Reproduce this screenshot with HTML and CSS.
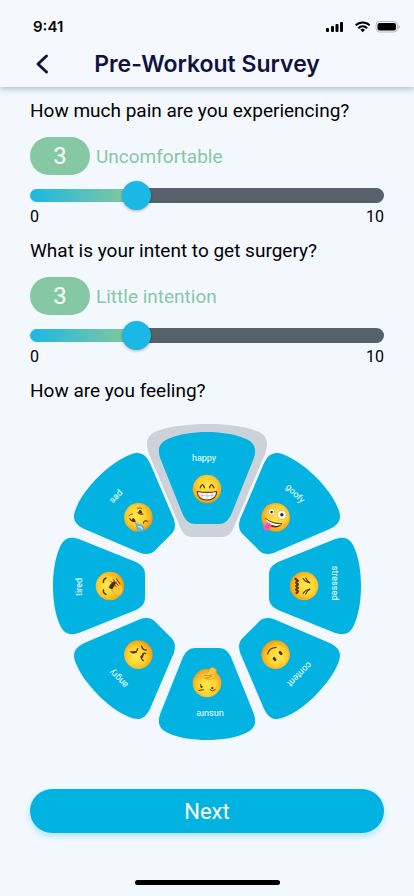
FILE: index.html
```html
<!DOCTYPE html>
<html lang="en">
<head>
<meta charset="utf-8">
<meta name="viewport" content="width=device-width, initial-scale=1">
<title>Pre-Workout Survey</title>
<link rel="stylesheet" href="styles.css">
</head>
<body>
<header class="top">
  <div class="status">
    <span class="time">9:41</span>
    <svg class="status-icons" width="74" height="14" viewBox="0 0 74 14" aria-hidden="true">
      <rect x="0" y="8" width="3" height="4" rx="1"/>
      <rect x="5" y="6" width="3" height="6" rx="1"/>
      <rect x="9.500" y="4" width="3" height="8" rx="1"/>
      <rect x="14" y="2" width="3" height="10" rx="1"/>
      <g fill="none" stroke="#000" stroke-width="2">
        <path d="M29.7 5.4a10 10 0 0 1 14 0"/>
        <path d="M32.3 8.2a6.200 6.200 0 0 1 8.800 0"/>
      </g>
      <path d="M36.700 12.200l-2.300-2.400a3.400 3.400 0 0 1 4.600 0z"/>
      <rect x="50" y="1.500" width="21.500" height="10.500" rx="3.500" fill="none" stroke="#b6babf"/>
      <rect x="51.500" y="3" width="18.500" height="7.500" rx="2"/>
      <path d="M72.500 5v4q1.500-.6 1.500-2t-1.500-2z" fill="#b6babf"/>
    </svg>
  </div>
  <div class="bar">
    <button class="back" type="button" aria-label="Back">
      <svg width="14" height="22" viewBox="0 0 14 22" aria-hidden="true"><path d="M11.500 3L3 11l8.500 8"/></svg>
    </button>
    <h1>Pre-Workout Survey</h1>
  </div>
</header>
<main>
  <form class="survey">
    <section class="question">
      <label class="prompt" for="pain">How much pain are you experiencing?</label>
      <div class="answer"><output class="pill" for="pain">3</output><span>Uncomfortable</span></div>
      <div class="slider">
        <div class="track"><div class="fill" style="width:30%"></div></div>
        <input id="pain" type="range" min="0" max="10" value="3">
      </div>
      <div class="ends"><span>0</span><span>10</span></div>
    </section>
    <section class="question">
      <label class="prompt" for="intent">What is your intent to get surgery?</label>
      <div class="answer"><output class="pill" for="intent">3</output><span>Little intention</span></div>
      <div class="slider">
        <div class="track"><div class="fill" style="width:30%"></div></div>
        <input id="intent" type="range" min="0" max="10" value="3">
      </div>
      <div class="ends"><span>0</span><span>10</span></div>
    </section>
    <fieldset class="feelings">
      <legend class="prompt">How are you feeling?</legend>
      <div class="wheel">
        <label class="slice"><input type="radio" name="feeling" checked>
          <svg viewBox="-162 -162 324 324">
            <defs>
              <radialGradient id="skin" cx=".5" cy=".42" r=".6">
                <stop offset="0" stop-color="#ffe94f"/><stop offset=".55" stop-color="#ffd130"/><stop offset=".85" stop-color="#f7a81b"/><stop offset="1" stop-color="#e08a12"/>
              </radialGradient>
              <path id="halo" d="M-15-49C-20-49-24-52-26-57L-58-132C-62-144-60-151-50-155C-36-160-18-162 0-162S36-160 50-155C60-151 62-144 58-132L26-57C24-52 20-49 15-49Z"/>
              <path id="wedge" d="M-12-62C-17-62-21-65-24-71L-46.500-127C-50-137-48-143-39-147C-28-152-14-154 0-154S28-152 39-147C48-143 50-137 46.500-127L24-71C21-65 17-62 12-62Z"/>
              <circle id="face" cy="-97" r="14.300" fill="url(#skin)"/>
            </defs>
            <use class="halo" href="#halo"/><use class="wedge" href="#wedge"/><text x="-3" y="-125">happy</text><use href="#face"/>
            <g class="ink" transform="translate(0 -97)">
              <path d="M-6.800-1.200Q-4.600-7.500-2.500-1.200M2.500-1.200Q4.600-7.500 6.800-1.200"/>
              <path d="M-9.700 2.500Q0 4.300 9.700 2.500Q9.500 11 0 11T-9.700 2.500Z" fill="#fff" stroke-width="1.100"/>
              <path d="M-9 6Q0 7.800 9 6M0 3.500V10.500M-5 3.500V9.800M5 3.500V9.800" stroke-width=".5" stroke="#9d8d80"/>
            </g>
          </svg>
        </label>
        <label class="slice"><input type="radio" name="feeling">
          <svg viewBox="-162 -162 324 324"><g transform="rotate(45)">
            <use class="wedge" href="#wedge"/><text x="-3" y="-125">goofy</text><use href="#face"/>
            <g class="ink" transform="translate(0 -97) rotate(-45)">
              <circle cx="-4" cy="-5.500" r="3.200" fill="#fff" stroke="#c98a35" stroke-width=".5"/><circle cx="-4" cy="-5.300" r="1.300" class="dot"/>
              <circle cx="6.300" cy="-2.600" r="4.500" fill="#fff" stroke="#c98a35" stroke-width=".5"/><circle cx="6.300" cy="-2.600" r="1.700" class="dot"/>
              <path d="M-10.500 0C-6 4.500 0 6 6.800 5.500C4 11-2 11-6.500 8Q-9.800 5-10.500 0Z" class="dot"/>
              <path d="M-9.800 1.500C-5 5.600 0 7 5.800 6.400Q4 8.300 1 8.600Q-5 8-9.300 4Z" fill="#fff" stroke="none"/>
              <path d="M-9.500 6C-6.500 4.500-3 6.500-4.600 9.500C-6 13.500-9.500 14-11.600 11.800C-13 9.500-11.800 7-9.500 6Z" fill="#ff58a7" stroke="none"/>
              <path d="M-6.500 7.500Q-7.800 9-8.600 10.500" stroke="#d83383" stroke-width=".7"/>
            </g></g>
          </svg>
        </label>
        <label class="slice"><input type="radio" name="feeling">
          <svg viewBox="-162 -162 324 324"><g transform="rotate(90)">
            <use class="wedge" href="#wedge"/><text x="-3" y="-125">stressed</text><use href="#face"/>
            <g class="ink" transform="translate(0 -97) rotate(-90)">
              <path d="M-.8-7.500Q1-4 6-3Q3-4.800 1.800-8M-.8 7.500Q1 4 6 3Q3 4.800 1.800 8" stroke-width="1.200"/>
              <path d="M-8.500-7l2.500 1.800-2 1.800 2 1.800-2 1.600 2 1.800-2 1.800 2 1.800-1.500 1.600" stroke-width="2.200"/>
            </g></g>
          </svg>
        </label>
        <label class="slice"><input type="radio" name="feeling">
          <svg viewBox="-162 -162 324 324"><g transform="rotate(135)">
            <use class="wedge" href="#wedge"/><text x="-3" y="-125">content</text><use href="#face"/>
            <g class="ink" transform="translate(0 -97) rotate(-135)">
              <path d="M-8-.500Q-6.500-6.800.500-7.300" stroke-width="1.200"/>
              <ellipse cx="-1" cy="4.500" rx="1.500" ry="2.300" transform="rotate(-40 -1 4.500)" class="dot"/>
              <ellipse cx="5" cy="-1.500" rx="1.500" ry="2.300" transform="rotate(-40 5 -1.500)" class="dot"/>
            </g></g>
          </svg>
        </label>
        <label class="slice"><input type="radio" name="feeling">
          <svg viewBox="-162 -162 324 324"><g transform="rotate(180)">
            <use class="wedge" href="#wedge"/><text x="-3" y="-125">unsure</text><use href="#face"/>
            <g class="ink" transform="translate(0 -97) rotate(180)">
              <path d="M-11-6.500C-8-9.500-3-10 1-10.300L3-14.500Q5-16.300 7.500-14.800Q10.500-13.500 9-11L8-4.800Q2-2.700-2.500-4.200Q-5-7-11-6.500Z" fill="#ffc83b" stroke="#e89822" stroke-width=".6"/>
              <path d="M-3-7.500Q1-6.500 5-8M-2-5Q2-4.800 4.500-6.500" stroke="#c6791b" stroke-width=".7"/>
              <path d="M-6.500 1.500L-5.500 3.800M-8 7.400Q-5.500 7-3.500 6.800M3 6.700Q5.300 9.200 8.200 6.700" stroke-width="1"/>
              <circle cx="-5.500" cy="3.800" r="1.100" class="dot"/><circle cx="5.300" cy="5" r="1.100" class="dot"/>
            </g></g>
          </svg>
        </label>
        <label class="slice"><input type="radio" name="feeling">
          <svg viewBox="-162 -162 324 324"><g transform="rotate(225)">
            <use class="wedge" href="#wedge"/><text x="-3" y="-125">angry</text><use href="#face"/>
            <g class="ink" transform="translate(0 -97) rotate(-225)">
              <path d="M-7.500-2.800Q-5.500-1-3.300-2.300Q-1-3.400-.8-6M3.200-8.500Q4-4.500 8-4.500M7.300-1Q5.300-2 4.500-.3Q4 1.800 2.500 2.200Q3 4.500 4.800 6" stroke-width="1.400"/>
              <path d="M-5.500-2.800l3 .4M4.500-.2L3.800 2.500" stroke-width="1.800"/>
            </g></g>
          </svg>
        </label>
        <label class="slice"><input type="radio" name="feeling">
          <svg viewBox="-162 -162 324 324"><g transform="rotate(270)">
            <use class="wedge" href="#wedge"/><text x="-1" y="-125">tired</text><use href="#face"/>
            <g class="ink" transform="translate(0 -97) rotate(-270)">
              <path d="M-6.500-3.500Q-7.200-6.500-4-8M-6.500 4Q-7.200 7-4 8.500" stroke-width="1.500"/>
              <path d="M-1.500 1.500Q1 -3 4-5L9 1Q7 6 2 3.500Z" class="dot"/>
              <path d="M2 4L7-4.500Q8.500-6 9.500-4L12.500 0Q14 5 11 8.500Q8 11.500 4.500 8.500L3 6Z" fill="#ffc533" stroke="#dc901e" stroke-width=".6"/>
              <path d="M1-4.500L6 .5M3.300-6.500L8-.8M6.300-7.500L10-1.800" stroke="#6e3b0b" stroke-width="1"/>
            </g></g>
          </svg>
        </label>
        <label class="slice"><input type="radio" name="feeling">
          <svg viewBox="-162 -162 324 324"><g transform="rotate(315)">
            <use class="wedge" href="#wedge"/><text x="-1" y="-125">sad</text><use href="#face"/>
            <g class="ink" transform="translate(0 -97) rotate(-315)">
              <path d="M-9.500-1.500Q-8.500-3.600-6-3.500M-1-9.300Q1.500-10.300 3.500-8.800" stroke="#9b5a13" stroke-width="1"/>
              <path d="M-8.800 1.200Q-7 4.500-3 4.300M-.5-5Q.5-2.500 4.500-3.500M5 5.700Q5.500 2.600 9.300 3.800" stroke-width="1.100"/>
              <ellipse cx="-4.800" cy="2.700" rx="1.500" ry="2" transform="rotate(-40 -4.800 2.700)" class="dot"/>
              <ellipse cx="2" cy="-5.500" rx="1.500" ry="2" transform="rotate(-40 2 -5.500)" class="dot"/>
              <path d="M-2.800 6C1.500 6.800 6 8 5.600 11.500C5 15 .5 15.300-1 12.500C-2 10.300-1.300 8-2.800 6Z" fill="#55b9f0" stroke="#3498d5" stroke-width=".4"/>
              <path d="M.2 9.300Q3.500 9.500 3.500 11.500" stroke="#c9efff" stroke-width="1.300"/>
            </g></g>
          </svg>
        </label>
      </div>
    </fieldset>
    <button class="next" type="submit">Next</button>
  </form>
</main>
<div class="home"></div>
</body>
</html>
```

FILE: styles.css
```css
* { box-sizing: border-box; }
body {
  margin: 0;
  min-height: 100vh;
  display: flex;
  flex-direction: column;
  background: #f3f8ff;
  color: #000;
  font-family: Roboto, "Liberation Sans", sans-serif;
}
button { font: inherit; border: 0; cursor: pointer; }

.top {
  background: #f5f9ff;
  box-shadow: 0 2px 6px rgba(30, 35, 70, .3);
  padding-top: 16px;
}
.status {
  display: flex;
  align-items: center;
  justify-content: space-between;
  height: 22px;
  padding: 0 14px 0 33px;
}
.time { font: 600 15px/20px Inter, sans-serif; }
.bar {
  display: grid;
  grid-template-columns: 54px 1fr 54px;
  align-items: center;
  height: 49px;
  padding: 3px 8px 0;
}
.back {
  display: grid;
  place-items: center end;
  height: 40px;
  padding: 0 13px 0 0;
  background: none;
}
.back path {
  fill: none;
  stroke: #11133f;
  stroke-width: 3;
  stroke-linecap: round;
  stroke-linejoin: round;
}
h1 {
  margin: 0;
  color: #11133f;
  font: 600 23px/32px Inter, sans-serif;
  text-align: center;
  white-space: nowrap;
}

main { flex: 1; padding: 12px 30px 0; }
.survey { display: flex; flex-direction: column; }
.question { display: flex; flex-direction: column; margin-bottom: 12px; }
.prompt { padding: 0; font-size: 19px; line-height: 24px; }
.answer {
  display: flex;
  align-items: center;
  gap: 6px;
  margin: 14px 0 13px;
  color: #86c7a4;
  font-size: 19px;
}
.pill {
  width: 60px;
  border-radius: 19px;
  background: #86c7a4;
  color: #fff;
  font-size: 24px;
  line-height: 38px;
  text-align: center;
}
.slider { display: grid; }
.slider > * { grid-area: 1 / 1; }
.track {
  display: flex;
  align-items: center;
  height: 15px;
  border-radius: 8px;
  background: linear-gradient(90deg, transparent 30%, #56616b 30%);
}
.fill {
  height: 13px;
  border-radius: 7px 0 0 7px;
  background: linear-gradient(90deg, #1bb8e5, #8bc995);
}
.slider input {
  appearance: none;
  height: 29px;
  margin: -7px -14px;
  background: none;
}
.slider input::-webkit-slider-thumb {
  appearance: none;
  width: 29px;
  height: 29px;
  border-radius: 50%;
  background: #1bb8e5;
  box-shadow: 0 1px 3px rgba(0, 0, 0, .3);
}
.ends {
  display: flex;
  justify-content: space-between;
  margin-top: 4px;
  font-size: 16px;
  line-height: 20px;
}

.feelings { min-width: 0; margin: 0; padding: 0; border: 0; }
.wheel {
  display: grid;
  max-width: 324px;
  margin: 21px auto 0;
}
.slice { grid-area: 1 / 1; pointer-events: none; }
.slice input {
  position: absolute;
  margin: 0;
  opacity: 0;
}
.slice svg { display: block; width: 100%; }
.wedge { fill: #02b3e2; pointer-events: auto; cursor: pointer; }
.halo { display: none; fill: #cdd1d9; }
.slice input:checked + svg .halo { display: inline; }
.slice text { fill: #fff; font-size: 9px; text-anchor: middle; }
.ink {
  fill: none;
  stroke: #643409;
  stroke-width: 1.3;
  stroke-linecap: round;
  stroke-linejoin: round;
}
.dot { fill: #4d2808; stroke: none; }

.next {
  height: 44px;
  margin-top: 41px;
  border-radius: 22px;
  background: #02b3e2;
  box-shadow: 0 3px 6px rgba(2, 179, 226, .3);
  color: #fff;
  font-size: 22px;
}
.home {
  width: 145px;
  height: 5px;
  margin: 0 auto 11px;
  border-radius: 3px;
  background: #000;
}
```
